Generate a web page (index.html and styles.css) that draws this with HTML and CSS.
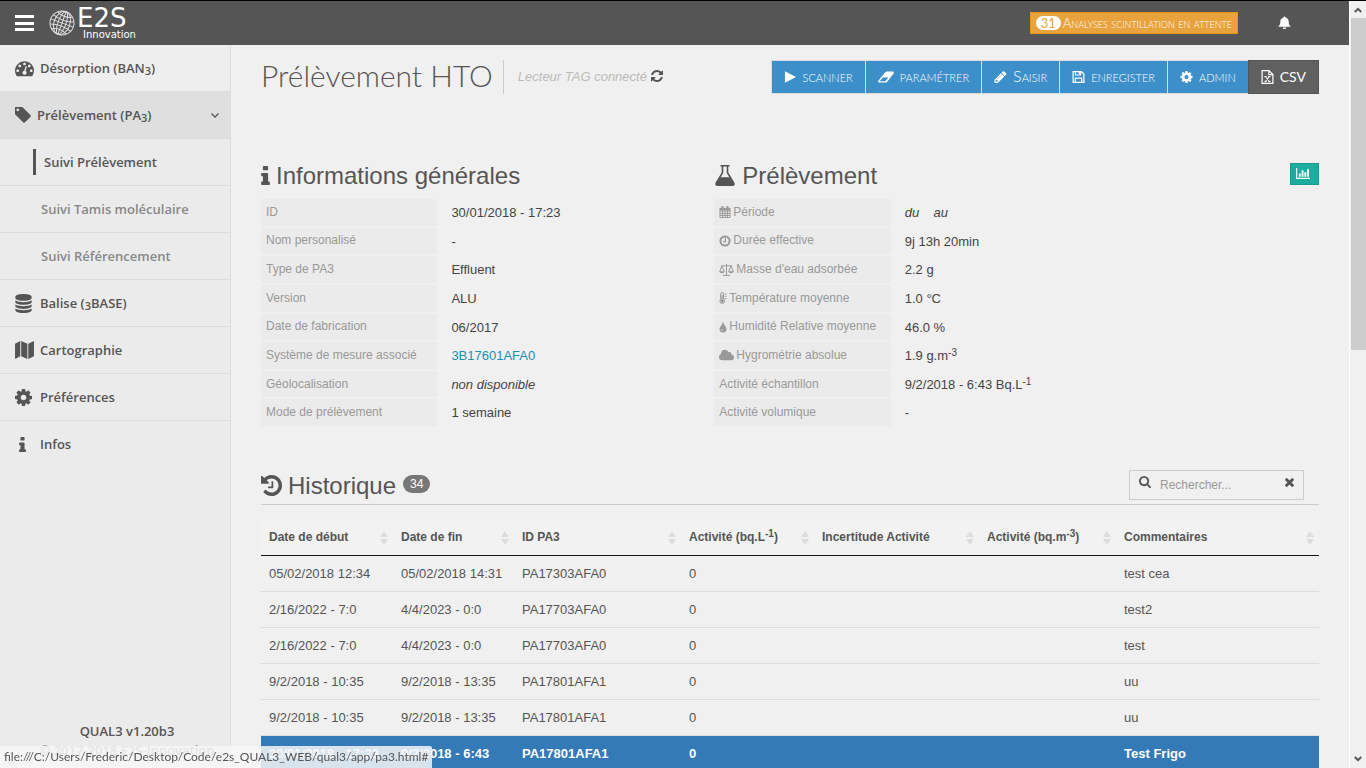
FILE: index.html
```html
<!DOCTYPE html>
<html lang="fr">
<head>
    <meta charset="UTF-8">
    <meta name="viewport" content="width=device-width, initial-scale=1.0">
    <title>QUAL3 - Prélèvement HTO</title>
    <link rel="stylesheet" href="styles.css">
</head>
<body>
    <!-- Icons -->
    <svg class="sprite" aria-hidden="true">
        <symbol id="i-bars" viewBox="0 0 19 16"><path d="M0 0h19v3H0zM0 7h19v3H0zM0 13h19v3H0z"/></symbol>
        <symbol id="i-bell" viewBox="0 0 14 14"><path d="M7 0c.7 0 1 .5 1 1 2.200.5 3.500 2 3.500 4.500 0 2.800.7 4.300 2.300 5.500H.2C1.800 9.800 2.500 8.300 2.500 5.500 2.500 3 3.800 1.500 6 1c0-.5.3-1 1-1zM5.200 11.800h3.600c-.1 1-.8 1.700-1.800 1.700s-1.700-.7-1.800-1.700z"/></symbol>
        <symbol id="i-tachometer" viewBox="0 128 1792 1536"><path d="M384 1152q0-53-37.500-90.500t-90.500-37.500-90.500 37.500-37.500 90.500 37.500 90.500 90.500 37.500 90.500-37.500 37.500-90.500zm192-448q0-53-37.500-90.500t-90.500-37.500-90.500 37.500-37.500 90.500 37.500 90.500 90.500 37.500 90.500-37.500 37.500-90.500zm428 481l101-382q6-26-7.500-48.500t-38.500-29.500-48 6.500-30 39.500l-101 382q-60 5-107 43.500t-63 98.500q-20 77 20 146t117 89 146-20 89-117q16-60-6-117t-72-91zm660-33q0-53-37.500-90.500t-90.500-37.500-90.500 37.500-37.500 90.500 37.500 90.500 90.500 37.500 90.500-37.500 37.500-90.500zm-640-640q0-53-37.500-90.500t-90.500-37.500-90.500 37.500-37.500 90.500 37.500 90.500 90.500 37.500 90.500-37.500 37.500-90.500zm448 192q0-53-37.500-90.500t-90.500-37.500-90.500 37.500-37.500 90.500 37.500 90.500 90.500 37.500 90.500-37.500 37.500-90.500zm320 448q0 261-141 483-19 29-54 29h-1402q-35 0-54-29-141-221-141-483 0-182 71-348t191-286 286-191 348-71 348 71 286 191 191 286 71 348z"/></symbol>
        <symbol id="i-tag" viewBox="192 192 1472 1472"><path d="M576 448q0-53-37.500-90.500t-90.500-37.500-90.500 37.500-37.500 90.500 37.500 90.500 90.500 37.500 90.500-37.500 37.500-90.500zm1067 576q0 53-37 90l-491 492q-39 37-91 37-53 0-90-37l-715-716q-38-37-64.500-101t-26.500-117v-416q0-52 38-90t90-38h416q53 0 117 26.500t102 64.500l715 714q37 39 37 91z"/></symbol>
        <symbol id="i-database" viewBox="128 0 1536 1792"><path d="M896 768q237 0 443-43t325-127v170q0 69-103 128t-280 93.500-385 34.500-385-34.500-280-93.500-103-128v-170q119 84 325 127t443 43zm0 768q237 0 443-43t325-127v170q0 69-103 128t-280 93.500-385 34.500-385-34.500-280-93.500-103-128v-170q119 84 325 127t443 43zm0-384q237 0 443-43t325-127v170q0 69-103 128t-280 93.500-385 34.500-385-34.500-280-93.500-103-128v-170q119 84 325 127t443 43zm0-1152q208 0 385 34.500t280 93.500 103 128v128q0 69-103 128t-280 93.500-385 34.500-385-34.500-280-93.500-103-128v-128q0-69 103-128t280-93.500 385-34.500z"/></symbol>
        <symbol id="i-map" viewBox="0 0 20 19"><path d="M0 3 5.500 0v16L0 19zM6.500 0l6.500 3v16l-6.500-3zM14 3l6-3v16l-6 3z"/></symbol>
        <symbol id="i-cog" viewBox="128 128 1536 1536"><path d="M1152 896q0-106-75-181t-181-75-181 75-75 181 75 181 181 75 181-75 75-181zm512-109v222q0 12-8 23t-20 13l-185 28q-19 54-39 91 35 50 107 138 10 12 10 25t-9 23q-27 37-99 108t-94 71q-12 0-26-9l-138-108q-44 23-91 38-16 136-29 186-7 28-36 28h-222q-14 0-24.500-8.500t-11.500-21.500l-28-184q-49-16-90-37l-141 107q-10 9-25 9-14 0-25-11-126-114-165-168-7-10-7-23 0-12 8-23 15-21 51-66.500t54-70.500q-27-50-41-99l-183-27q-13-2-21-12.500t-8-23.500v-222q0-12 8-23t19-13l186-28q14-46 39-92-40-57-107-138-10-12-10-24 0-10 9-23 26-36 98.500-107.500t94.500-71.500q13 0 26 10l138 107q44-23 91-38 16-136 29-186 7-28 36-28h222q14 0 24.500 8.500t11.500 21.500l28 184q49 16 90 37l142-107q9-9 24-9 13 0 25 10 129 119 165 170 7 8 7 22 0 12-8 23-15 21-51 66.500t-54 70.500q26 50 41 98l183 28q13 2 21 12.500t8 23.500z"/></symbol>
        <symbol id="i-info" viewBox="576 128 640 1408"><path d="M1216 1344v128q0 26-19 45t-45 19h-512q-26 0-45-19t-19-45v-128q0-26 19-45t45-19h64v-384h-64q-26 0-45-19t-19-45v-128q0-26 19-45t45-19h384q26 0 45 19t19 45v576h64q26 0 45 19t19 45zm-128-1152v192q0 26-19 45t-45 19h-256q-26 0-45-19t-19-45v-192q0-26 19-45t45-19h256q26 0 45 19t19 45z"/></symbol>
        <symbol id="i-refresh" viewBox="128 128 1536 1536"><path d="M1639 1056q0 5-1 7-64 268-268 434.500t-478 166.500q-146 0-282.500-55t-243.500-157l-129 129q-19 19-45 19t-45-19-19-45v-448q0-26 19-45t45-19h448q26 0 45 19t19 45-19 45l-137 137q71 66 161 102t187 36q134 0 250-65t186-179q11-17 53-117 8-23 30-23h192q13 0 22.500 9.500t9.500 22.500zm25-800v448q0 26-19 45t-45 19h-448q-26 0-45-19t-19-45 19-45l138-138q-148-137-349-137-134 0-250 65t-186 179q-11 17-53 117-8 23-30 23h-199q-13 0-22.500-9.500t-9.500-22.500v-7q65-268 270-434.500t480-166.500q146 0 284 55.500t245 156.500l130-129q19-19 45-19t45 19 19 45z"/></symbol>
        <symbol id="i-play" viewBox="0 0 12 13"><path d="M0 .4v12.200L12 6.500z"/></symbol>
        <symbol id="i-eraser" viewBox="0 0 16 11"><path d="M7.500.5Q8 0 8.700 0h6.300q1.400.4.800 1.800L9 10.400q-.5.6-1.200.6H1.200Q-.4 10.600.3 9.200zM1.700 9.700h5.700l3-3.600H4.700z" fill-rule="evenodd"/></symbol>
        <symbol id="i-pencil" viewBox="128 128 1536 1536"><path d="M491 1536l91-91-235-235-91 91v107h128v128h107zm523-928q0-22-22-22-10 0-17 7l-542 542q-7 7-7 17 0 22 22 22 10 0 17-7l542-542q7-7 7-17zm-54-192l416 416-832 832h-416v-416zm683 96q0 53-37 90l-166 166-416-416 166-165q36-38 90-38 53 0 91 38l235 234q37 39 37 91z"/></symbol>
        <symbol id="i-save" viewBox="0 0 12 12"><path d="M.6.6h8.400l2.400 2.400v8.400H.6zM3 .6v3.400h5.200V.6M2.800 11.400V7.200h6.400v4.200" fill="none" stroke="currentColor" stroke-width="1.200"/><path d="M6.200 1h1.400v2.200H6.200z"/></symbol>
        <symbol id="i-excel" viewBox="0 0 12 14"><path d="M.6.6h6.900l3.900 3.900v8.900H.6zM7.400.6v4h4" fill="none" stroke="currentColor" stroke-width="1.200"/><path d="m3.800 6.500 4.200 5M8 6.500l-4.200 5M2.900 6.500h2.200M6.800 6.500h2.200M2.900 11.500h2.200M6.800 11.500h2.200" fill="none" stroke="currentColor" stroke-width="1.100"/></symbol>
        <symbol id="i-flask" viewBox="0 0 20 21"><path d="M5.500 0h9v1.600h-1.200v6l6.200 10.200Q20.500 21 17.500 21h-15Q-.5 21 .5 17.800L6.700 7.600v-6H5.500zM8.300 1.600V8l-2.600 4.300h8.600L11.700 8V1.600z" fill-rule="evenodd"/></symbol>
        <symbol id="i-chart" viewBox="0 0 15 12"><path d="M0 0h1.200v10.600H15V12H0zM3 6h2v3.500H3zM6 2.500h2v7H6zM9 4.500h2v5H9zM12 1h2v8.500h-2z"/></symbol>
        <symbol id="i-calendar" viewBox="0 0 12 13"><path d="M.5 2.500h11v10H.5zM.5 5.500h11M.5 8h11M.5 10.300h11M3.300 5v7.500M6 5v7.500M8.700 5v7.500" fill="none" stroke="currentColor"/><path d="M.5 2.500h11v2.500H.5zM2.300 0h1.900v3H2.300zM7.800 0h1.900v3H7.800z"/></symbol>
        <symbol id="i-clock" viewBox="0 0 12 12"><circle cx="6" cy="6" r="4.600" fill="none" stroke="currentColor" stroke-width="2"/><path d="M6.400 3v3.600H3.800" fill="none" stroke="currentColor" stroke-width="1.200"/></symbol>
        <symbol id="i-balance" viewBox="0 0 15 12"><path d="M2 1.800h11M7.500 0v11.300M4 11.400h7M3 2 .7 7.500M3 2l2.300 5.500M12 2 9.700 7.500M12 2l2.300 5.500" fill="none" stroke="currentColor"/><path d="M.2 7.300h5.600Q5.400 9.300 3 9.300T.2 7.300zM9.200 7.300h5.600q-.4 2-2.800 2t-2.800-2z"/></symbol>
        <symbol id="i-thermo" viewBox="0 0 7 12"><path d="M1.200 7V2q0-1.400 1.400-1.400T4 2v5q1 .8 1 2 0 2.400-2.400 2.400T.5 9q0-1.200.7-2z" fill="none" stroke="currentColor"/><path d="M2 3h1.200v4.500q1 .5 1 1.500 0 1.500-1.600 1.500T1.200 9q0-1 .8-1.500zM5.200 1.500H7v1H5.200zM5.200 3.700H7v1H5.200zM5.200 5.900H7v1H5.200z"/></symbol>
        <symbol id="i-tint" viewBox="0 0 8 12"><path d="M4 .5q.5 2.500 2.300 4.800 1.200 1.500 1.200 2.700 0 3.500-3.500 3.500T.5 8q0-1.200 1.200-2.700Q3.500 3 4 .5zM2.600 8q-.7 1 0 1.700 1 .5 1.200-.6z" fill-rule="evenodd"/></symbol>
        <symbol id="i-cloud" viewBox="0 0 13 9"><path d="M3 9Q0 9 0 6.200 0 4.300 1.800 3.500 1.800 0 5.200 0q2.300 0 3.100 2.200 2-.8 2.500 1.600Q13 4.300 13 6.500 13 9 10.500 9z"/></symbol>
        <symbol id="i-history" viewBox="128 128 1536 1536"><path d="M1664 896q0 156-61 298t-164 245-245 164-298 61q-172 0-327-72.500t-264-204.500q-7-10-6.500-22.500t8.500-20.500l137-138q10-9 25-9 16 2 23 12 73 95 179 147t225 52q104 0 198.500-40.500t163.500-109.500 109.500-163.500 40.500-198.500-40.500-198.500-109.500-163.500-163.500-109.500-198.500-40.500q-98 0-188 35.500t-160 101.500l137 138q31 30 14 69-17 40-59 40h-448q-26 0-45-19t-19-45v-448q0-42 40-59 39-17 69 14l130 129q107-101 244.500-156.500t284.500-55.500q156 0 298 61t245 164 164 245 61 298zm-640-288v448q0 14-9 23t-23 9h-320q-14 0-23-9t-9-23v-64q0-14 9-23t23-9h224v-352q0-14 9-23t23-9h64q14 0 23 9t9 23z"/></symbol>
        <symbol id="i-search" viewBox="64 128 1664 1664"><path d="M1216 832q0-185-131.500-316.500t-316.500-131.500-316.500 131.500-131.500 316.500 131.500 316.500 316.500 131.500 316.500-131.500 131.500-316.500zm512 832q0 52-38 90t-90 38q-54 0-90-38l-343-342q-179 124-399 124-143 0-273.500-55.500t-225-150-150-225-55.500-273.500 55.500-273.500 150-225 225-150 273.500-55.500 273.500 55.500 225 150 150 225 55.500 273.500q0 220-124 399l343 343q37 37 37 90z"/></symbol>
        <symbol id="i-times" viewBox="302 366 1188 1188"><path d="M1490 1322q0 40-28 68l-136 136q-28 28-68 28t-68-28l-294-294-294 294q-28 28-68 28t-68-28l-136-136q-28-28-28-68t28-68l294-294-294-294q-28-28-28-68t28-68l136-136q28-28 68-28t68 28l294 294 294-294q28-28 68-28t68 28l136 136q28 28 28 68t-28 68l-294 294 294 294q28 28 28 68z"/></symbol>
        <symbol id="i-chevron" viewBox="0 0 8 5"><path d="M.5.5 4 4 7.500.5" fill="none" stroke="currentColor" stroke-width="1.300"/></symbol>
        <symbol id="i-scroll" viewBox="0 0 8 6"><path d="M.8 5 4 1.800 7.200 5" fill="none" stroke="currentColor" stroke-width="2"/></symbol>
    </svg>

    <div class="app">
        <header class="topbar">
            <button type="button" class="menu-toggle" aria-label="Menu"><svg class="icon"><use href="#i-bars"/></svg></button>
            <a href="#" class="brand">
                <svg class="globe" viewBox="0 0 26 26" aria-hidden="true">
                    <g fill="none" stroke="currentColor" transform="rotate(20 13 13)">
                        <circle cx="13" cy="13" r="12"/>
                        <ellipse cx="13" cy="13" rx="4" ry="12"/>
                        <ellipse cx="13" cy="13" rx="8" ry="12"/>
                        <path d="M13 1v24M1 13h24M2 8q11 4 22 0M2 18q11-4 22 0M5 4q8 4 16 0M5 22q8-4 16 0"/>
                    </g>
                </svg>
                <span class="brand-text">
                    <span class="brand-name">E2S</span>
                    <span class="brand-sub">Innovation</span>
                </span>
            </a>
            <button type="button" class="alert-btn"><span class="alert-count">31</span>Analyses scintillation en attente</button>
            <button type="button" class="bell-btn" aria-label="Notifications"><svg class="icon"><use href="#i-bell"/></svg></button>
        </header>

        <div class="layout">
            <nav class="sidebar">
                <ul>
                    <li class="first"><a href="#"><svg class="icon tachometer"><use href="#i-tachometer"/></svg><span>Désorption (BAN<sub>3</sub>)</span></a></li>
                    <li class="open"><a href="#"><svg class="icon tag"><use href="#i-tag"/></svg><span>Prélèvement (PA<sub>3</sub>)</span><svg class="icon chevron"><use href="#i-chevron"/></svg></a>
                        <ul>
                            <li class="current"><a href="#"><span>Suivi Prélèvement</span></a></li>
                            <li><a href="#">Suivi Tamis moléculaire</a></li>
                            <li><a href="#">Suivi Référencement</a></li>
                        </ul>
                    </li>
                    <li><a href="#"><svg class="icon database"><use href="#i-database"/></svg><span>Balise (<sub>3</sub>BASE)</span></a></li>
                    <li><a href="#"><svg class="icon map"><use href="#i-map"/></svg><span>Cartographie</span></a></li>
                    <li><a href="#"><svg class="icon cog"><use href="#i-cog"/></svg><span>Préférences</span></a></li>
                    <li class="last"><a href="#"><svg class="icon info"><use href="#i-info"/></svg><span>Infos</span></a></li>
                </ul>
                <div class="version">
                    <p>QUAL3 v1.20b3</p>
                    <p class="copyright">© 2017-2018 E2S-Innovation</p>
                </div>
            </nav>

            <main>
                <div class="page-header">
                    <h1>Prélèvement HTO</h1>
                    <p class="reader"><em>Lecteur TAG connecté</em><svg class="icon"><use href="#i-refresh"/></svg></p>
                    <div class="toolbar">
                        <button type="button"><svg class="icon"><use href="#i-play"/></svg>scanner</button>
                        <button type="button"><svg class="icon wide"><use href="#i-eraser"/></svg>paramétrer</button>
                        <button type="button"><svg class="icon"><use href="#i-pencil"/></svg>Saisir</button>
                        <button type="button"><svg class="icon"><use href="#i-save"/></svg>enregister</button>
                        <button type="button"><svg class="icon"><use href="#i-cog"/></svg>admin</button>
                        <button type="button" class="csv"><svg class="icon"><use href="#i-excel"/></svg>CSV</button>
                    </div>
                </div>

                <div class="row">
                    <section>
                        <h3><svg class="icon info"><use href="#i-info"/></svg>Informations générales</h3>
                        <dl>
                            <dt>ID</dt><dd>30/01/2018 - 17:23</dd>
                            <dt>Nom personalisé</dt><dd>-</dd>
                            <dt>Type de PA3</dt><dd>Effluent</dd>
                            <dt>Version</dt><dd>ALU</dd>
                            <dt>Date de fabrication</dt><dd>06/2017</dd>
                            <dt>Système de mesure associé</dt><dd><a href="#">3B17601AFA0</a></dd>
                            <dt>Géolocalisation</dt><dd><em>non disponible</em></dd>
                            <dt>Mode de prélèvement</dt><dd>1 semaine</dd>
                        </dl>
                    </section>
                    <section>
                        <h3><svg class="icon flask"><use href="#i-flask"/></svg>Prélèvement</h3>
                        <dl>
                            <dt><svg class="icon"><use href="#i-calendar"/></svg>Période</dt><dd><em>du &nbsp;&nbsp; au</em></dd>
                            <dt><svg class="icon"><use href="#i-clock"/></svg>Durée effective</dt><dd>9j 13h 20min</dd>
                            <dt><svg class="icon wide"><use href="#i-balance"/></svg>Masse d'eau adsorbée</dt><dd>2.2 g</dd>
                            <dt><svg class="icon thin"><use href="#i-thermo"/></svg>Température moyenne</dt><dd>1.0 °C</dd>
                            <dt><svg class="icon thin"><use href="#i-tint"/></svg>Humidité Relative moyenne</dt><dd>46.0 %</dd>
                            <dt><svg class="icon wide"><use href="#i-cloud"/></svg>Hygrométrie absolue</dt><dd>1.9 g.m<sup>-3</sup></dd>
                            <dt>Activité échantillon</dt><dd>9/2/2018 - 6:43 Bq.L<sup>-1</sup></dd>
                            <dt>Activité volumique</dt><dd>-</dd>
                        </dl>
                    </section>
                    <div class="chart-col">
                        <button type="button" class="chart-btn" aria-label="Graphique"><svg class="icon"><use href="#i-chart"/></svg></button>
                    </div>
                </div>

                <div class="history-header">
                    <h3><svg class="icon history"><use href="#i-history"/></svg>Historique</h3>
                    <span class="badge">34</span>
                    <div class="search">
                        <label for="search" aria-label="Rechercher"><svg class="icon"><use href="#i-search"/></svg></label>
                        <input type="text" id="search" placeholder="Rechercher...">
                        <button type="button" aria-label="Effacer"><svg class="icon"><use href="#i-times"/></svg></button>
                    </div>
                </div>

                <table>
                    <colgroup>
                        <col class="c-start"><col class="c-end"><col class="c-id"><col class="c-act"><col class="c-inc"><col class="c-vol"><col>
                    </colgroup>
                    <thead>
                        <tr>
                            <th><div>Date de début<span class="sort"></span></div></th>
                            <th><div>Date de fin<span class="sort"></span></div></th>
                            <th><div>ID PA3<span class="sort"></span></div></th>
                            <th><div><span>Activité (bq.L<sup>-1</sup>)</span><span class="sort"></span></div></th>
                            <th><div>Incertitude Activité<span class="sort"></span></div></th>
                            <th><div><span>Activité (bq.m<sup>-3</sup>)</span><span class="sort"></span></div></th>
                            <th><div>Commentaires<span class="sort"></span></div></th>
                        </tr>
                    </thead>
                    <tbody>
                        <tr><td>05/02/2018 12:34</td><td>05/02/2018 14:31</td><td>PA17303AFA0</td><td>0</td><td></td><td></td><td>test cea</td></tr>
                        <tr><td>2/16/2022 - 7:0</td><td>4/4/2023 - 0:0</td><td>PA17703AFA0</td><td>0</td><td></td><td></td><td>test2</td></tr>
                        <tr><td>2/16/2022 - 7:0</td><td>4/4/2023 - 0:0</td><td>PA17703AFA0</td><td>0</td><td></td><td></td><td>test</td></tr>
                        <tr><td>9/2/2018 - 10:35</td><td>9/2/2018 - 13:35</td><td>PA17801AFA1</td><td>0</td><td></td><td></td><td>uu</td></tr>
                        <tr><td>9/2/2018 - 10:35</td><td>9/2/2018 - 13:35</td><td>PA17801AFA1</td><td>0</td><td></td><td></td><td>uu</td></tr>
                        <tr class="selected"><td>30/01/2018 - 17:23</td><td>9/2/2018 - 6:43</td><td>PA17801AFA1</td><td>0</td><td></td><td></td><td>Test Frigo</td></tr>
                    </tbody>
                </table>
            </main>
        </div>
    </div>

    <div class="scrollbar" aria-hidden="true">
        <svg class="icon"><use href="#i-scroll"/></svg>
        <div class="thumb"></div>
        <svg class="icon down"><use href="#i-scroll"/></svg>
    </div>

    <div class="link-status">file:///C:/Users/Frederic/Desktop/Code/e2s_QUAL3_WEB/qual3/app/pa3.html#</div>
</body>
</html>
```
FILE: styles.css
```css
* {
    box-sizing: border-box;
}
body {
    margin: 0;
    display: flex;
    height: 100vh;
    overflow: hidden;
    border-top: 1px solid #000;
    background-color: #f0f0f0;
    color: #555;
    font-family: "Liberation Sans", Arial, sans-serif;
    font-size: 13px;
    line-height: 19px;
}
h1, h3, p, ul, dl, dd {
    margin: 0;
    padding: 0;
}
ul {
    list-style: none;
}
a {
    color: inherit;
    text-decoration: none;
}
button {
    font-family: Lato, sans-serif;
    cursor: pointer;
}
sub, sup {
    font-size: 10px;
    line-height: 0;
}
sub {
    font-size: 11px;
    vertical-align: -2px;
}
sup {
    vertical-align: 4px;
}
.sprite {
    position: absolute;
    width: 0;
    height: 0;
}
.icon {
    display: block;
    flex: none;
    width: 12px;
    height: 12px;
    fill: currentColor;
}
.app {
    flex: 1;
    min-width: 0;
    display: flex;
    flex-direction: column;
}

/* top bar */
.topbar {
    display: flex;
    align-items: center;
    height: 44px;
    flex: none;
    padding: 0 58px 0 15px;
    background-color: #555;
    color: #fff;
}
.menu-toggle, .bell-btn {
    padding: 0;
    border: none;
    background: none;
    color: #fff;
}
.menu-toggle .icon {
    width: 19px;
    height: 16px;
}
.brand {
    display: flex;
    align-items: center;
    gap: 2px;
    margin-left: 15px;
    margin-right: auto;
}
.globe {
    width: 26px;
    height: 26px;
    color: #ddd;
}
.brand-text {
    display: flex;
    flex-direction: column;
    font-family: "DejaVu Sans", sans-serif;
}
.brand-name {
    font-size: 26px;
    line-height: 24px;
}
.brand-sub {
    padding-left: 6px;
    font-size: 10px;
    line-height: 10px;
}
.alert-btn {
    display: flex;
    align-items: center;
    gap: 2px;
    height: 22px;
    margin-right: 40px;
    padding: 0 5px 1px;
    border: 1px solid #e5941a;
    background-color: #e8a33d;
    color: #fff;
    font-size: 13px;
    font-weight: 300;
    font-variant: small-caps;
}
.alert-count {
    padding: 0 5px;
    border-radius: 7px;
    background-color: #fff;
    color: #e8a33d;
    font-weight: 400;
    line-height: 14px;
}
.bell-btn .icon {
    width: 13px;
    height: 14px;
}

/* sidebar */
.layout {
    flex: 1;
    min-height: 0;
    display: flex;
}
.sidebar {
    display: flex;
    flex-direction: column;
    justify-content: space-between;
    width: 231px;
    flex: none;
    border-right: 1px solid #ddd;
    background-color: #ebebeb;
    font-family: "Open Sans", sans-serif;
    font-weight: 600;
}
.sidebar a {
    display: flex;
    align-items: center;
    gap: 6px;
    height: 47px;
    padding: 0 11px 0 15px;
    border-bottom: 1px solid #ddd;
}
.sidebar .first > a {
    background-color: #eee;
}
.sidebar .open > a {
    background-color: #dfdfdf;
}
.sidebar .last > a {
    border-bottom: none;
}
.sidebar li li a {
    padding-left: 41px;
    color: #888;
}
.sidebar li.current a {
    padding-left: 33px;
    color: #555;
}
.current span {
    padding-left: 8px;
    border-left: 3px solid #555;
    line-height: 26px;
}
.sidebar .tachometer, .sidebar .map {
    width: 19px;
    height: 18px;
}
.sidebar .tag {
    width: 16px;
    height: 16px;
}
.sidebar .database {
    width: 17px;
    height: 19px;
    margin-right: 2px;
}
.sidebar .cog {
    width: 17px;
    height: 17px;
    margin-right: 2px;
}
.sidebar .info {
    width: 15px;
    height: 15px;
    margin-right: 4px;
}
.sidebar .chevron {
    width: 8px;
    height: 5px;
    margin-left: auto;
}
.version {
    padding: 0 0 8px 24px;
    text-align: center;
}
.copyright {
    color: #888;
}

/* main area */
main {
    flex: 1;
    min-width: 0;
    padding: 15px 30px 0;
}
.page-header {
    display: flex;
    align-items: center;
    height: 34px;
    margin-bottom: 65px;
}
h1 {
    font-family: Lato, sans-serif;
    font-size: 30px;
    font-weight: 300;
    line-height: 30px;
    padding-bottom: 4px;
}
.reader {
    display: flex;
    align-items: center;
    gap: 4px;
    height: 34px;
    margin-left: 10px;
    margin-right: auto;
    padding: 0 0 2px 14px;
    border-left: 1px solid #ccc;
}
.reader em {
    color: #bbb;
}
.toolbar {
    display: flex;
}
.toolbar button {
    display: flex;
    align-items: center;
    gap: 6px;
    height: 34px;
    margin-left: -1px;
    padding: 0 12px 3px;
    border: 1px solid #ddd;
    background-color: #3c8fc9;
    color: #fff;
    font-size: 16px;
    font-weight: 300;
    font-variant: small-caps;
}
.toolbar .icon {
    width: 13px;
    margin-top: 3px;
}
.toolbar .wide {
    width: 16px;
}
.toolbar .csv {
    padding-bottom: 1px;
    border-color: #555;
    background-color: #606060;
    font-size: 14px;
    font-weight: 400;
}
.toolbar .csv .icon {
    height: 14px;
    margin-top: 0;
}
.row {
    display: grid;
    grid-template-columns: 5fr 5fr 2fr;
    margin-right: -30px;
}
.row > * {
    padding-right: 30px;
}
h3 {
    display: flex;
    align-items: center;
    gap: 6px;
    height: 32px;
    font-size: 24px;
    font-weight: normal;
}
h3 .info {
    width: 9px;
    height: 19px;
}
h3 .flask {
    width: 22px;
    height: 21px;
}
h3 .history {
    width: 21px;
    height: 21px;
}
dl {
    display: grid;
    grid-template-columns: 5fr 7fr;
    grid-auto-rows: 1fr;
    row-gap: 2px;
    height: 227px;
    margin-top: 8px;
}
dt {
    display: flex;
    align-items: center;
    gap: 2px;
    padding-left: 5px;
    background-color: #ebebeb;
    color: #999;
    font-size: 12px;
    white-space: nowrap;
}
dt .wide {
    width: 15px;
}
dt .thin {
    width: 8px;
}
dd {
    padding: 4px 0 0 14px;
    color: #444;
}
dd a {
    color: #1f8fb5;
}
.chart-col {
    display: flex;
    justify-content: flex-end;
    align-items: flex-start;
    padding-top: 4px;
}
.chart-btn {
    padding: 4px 8px 5px 5px;
    border: 1px solid #189a8c;
    background-color: #1cada0;
    color: #fff;
}
.chart-btn .icon {
    width: 14px;
    height: 11px;
}

/* history */
.history-header {
    display: flex;
    height: 36px;
    margin-top: 43px;
    padding-right: 15px;
    border-bottom: 1px solid #ccc;
}
.history-header h3 {
    margin-right: 7px;
}
.badge {
    height: 18px;
    margin-top: 6px;
    padding: 0 7px;
    border-radius: 9px;
    background-color: #777;
    color: #fff;
    font-size: 12px;
    line-height: 18px;
}
.search {
    display: flex;
    width: 175px;
    height: 30px;
    margin: 1px 0 0 auto;
    padding: 0 9px;
    border: 1px solid #ccc;
}
.search label {
    padding-top: 5px;
}
.search input {
    flex: 1;
    min-width: 0;
    padding: 0 9px;
    border: none;
    background: none;
    outline: none;
    font-family: inherit;
    font-size: 12px;
}
.search input::placeholder {
    color: #999;
}
.search button {
    align-self: flex-start;
    padding: 7px 0 0;
    border: none;
    background: none;
    color: #555;
}
.search button .icon {
    width: 9px;
    height: 9px;
}
table {
    width: 100%;
    margin-top: 15px;
    border-collapse: separate;
    border-spacing: 0;
    table-layout: fixed;
}
.c-start {
    width: 132px;
}
.c-end {
    width: 121px;
}
.c-id {
    width: 167px;
}
.c-act {
    width: 133px;
}
.c-inc {
    width: 165px;
}
.c-vol {
    width: 137px;
}
th {
    height: 36px;
    padding: 0 5px 0 8px;
    border-bottom: 1px solid #111;
    background-color: #f2f2f2;
    font-size: 12px;
    text-align: left;
    white-space: nowrap;
}
th div {
    display: flex;
    align-items: center;
    justify-content: space-between;
}
.sort::before, .sort::after {
    content: "";
    display: block;
    border: 4px solid transparent;
}
.sort::before {
    border-top: none;
    border-bottom: 6px solid #ddd;
    margin-bottom: 2px;
}
.sort::after {
    border-bottom: none;
    border-top: 6px solid #ddd;
}
td {
    height: 36px;
    padding: 0 8px;
    border-bottom: 1px solid #ddd;
    white-space: nowrap;
}
.selected td {
    border-color: #337ab7;
    background-color: #337ab7;
    color: #fff;
    font-weight: bold;
}

/* window scrollbar */
.scrollbar {
    display: flex;
    flex-direction: column;
    align-items: center;
    width: 17px;
    flex: none;
    padding: 6px 0;
    border-left: 1px solid #fff;
    background-color: #f0f0f0;
}
.scrollbar .icon {
    width: 8px;
    height: 6px;
}
.scrollbar .down {
    margin-top: auto;
    transform: rotate(180deg);
}
.thumb {
    width: 15px;
    height: 44%;
    margin-top: 5px;
    background-color: #cdcdcd;
}
.link-status {
    position: fixed;
    left: 0;
    bottom: 0;
    height: 22px;
    padding: 0 4px;
    border-radius: 0 2px 0 0;
    background-color: rgba(247, 247, 247, 0.84);
    font-family: Lato, sans-serif;
    font-size: 12px;
    line-height: 22px;
    white-space: nowrap;
}
```
